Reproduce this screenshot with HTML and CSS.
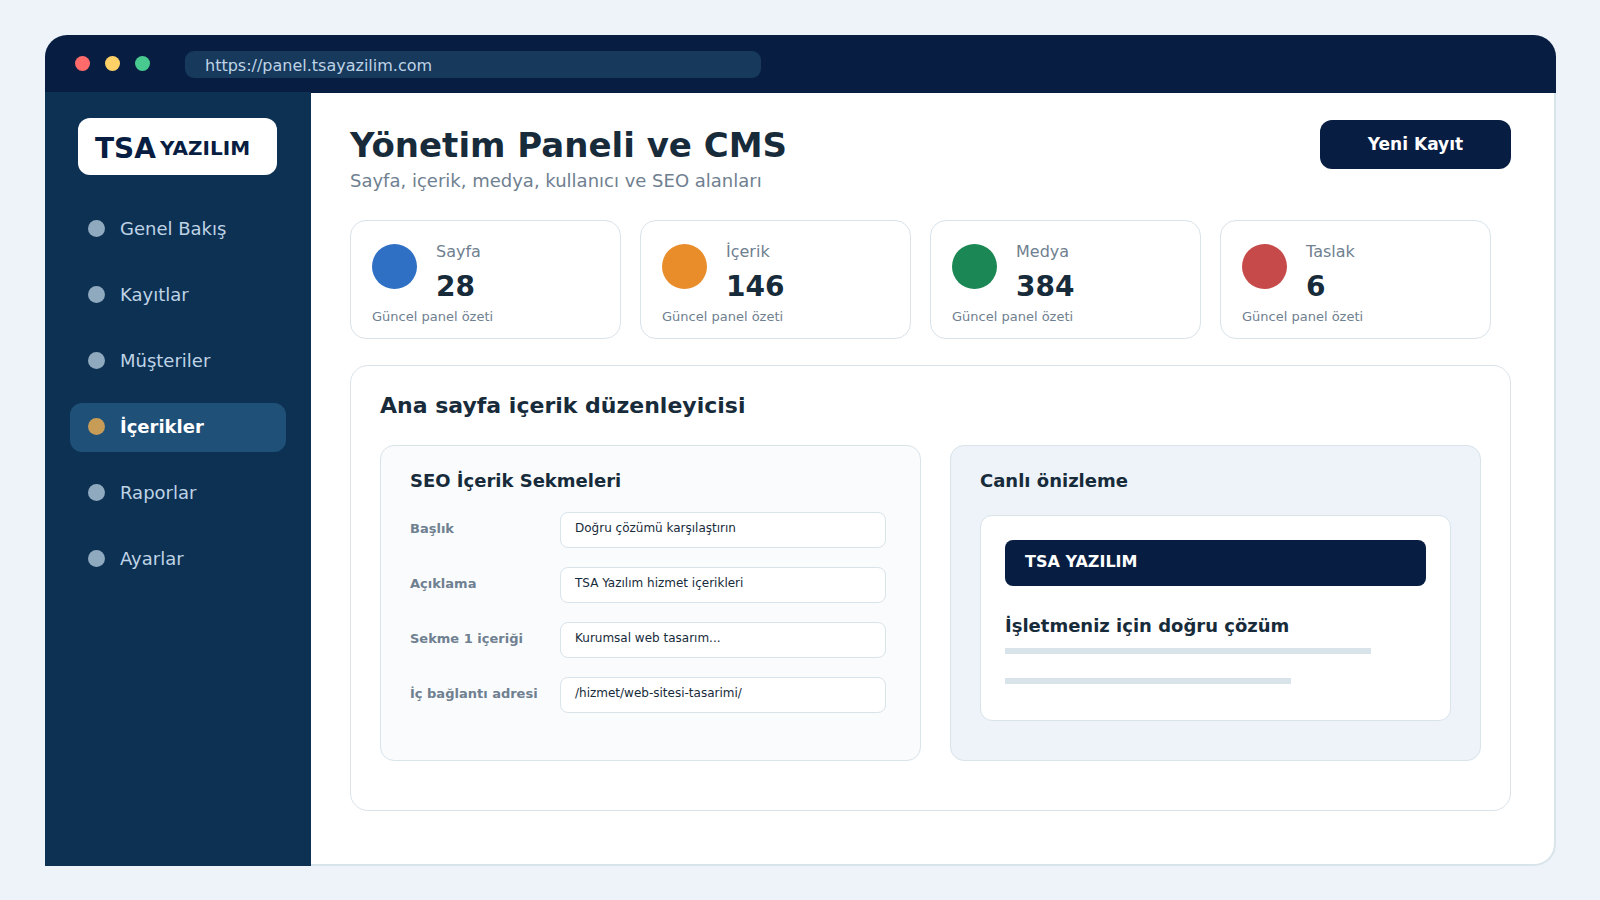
FILE: index.html
```html
<!DOCTYPE html>
<html lang="tr">
  <head>
    <meta charset="UTF-8" />
    <meta name="viewport" content="width=device-width, initial-scale=1.0" />
    <title>Yönetim Paneli ve CMS</title>
    <link rel="stylesheet" href="styles.css">
  </head>
  <body>
    <div class="window">
      <div class="titlebar">
        <span class="light red"></span>
        <span class="light yellow"></span>
        <span class="light green"></span>
        <div class="url">https://panel.tsayazilim.com</div>
      </div>

      <div class="layout">
        <aside class="sidebar">
          <div class="logo"><span class="logo-big">TSA</span><span class="logo-small">YAZILIM</span></div>
          <nav class="menu">
            <a class="item"><i></i><span>Genel Bakış</span></a>
            <a class="item"><i></i><span>Kayıtlar</span></a>
            <a class="item"><i></i><span>Müşteriler</span></a>
            <a class="item active"><i></i><span>İçerikler</span></a>
            <a class="item"><i></i><span>Raporlar</span></a>
            <a class="item"><i></i><span>Ayarlar</span></a>
          </nav>
        </aside>

        <main class="main">
          <header class="header">
            <div>
              <h1>Yönetim Paneli ve CMS</h1>
              <p class="subtitle">Sayfa, içerik, medya, kullanıcı ve SEO alanları</p>
            </div>
            <button class="add">Yeni Kayıt</button>
          </header>

          <section class="cards">
            <div class="card">
              <div class="card-head">
                <span class="circle blue"></span>
                <div>
                  <div class="label">Sayfa</div>
                  <div class="value">28</div>
                </div>
              </div>
              <div class="note">Güncel panel özeti</div>
            </div>
            <div class="card">
              <div class="card-head">
                <span class="circle orange"></span>
                <div>
                  <div class="label">İçerik</div>
                  <div class="value">146</div>
                </div>
              </div>
              <div class="note">Güncel panel özeti</div>
            </div>
            <div class="card">
              <div class="card-head">
                <span class="circle emerald"></span>
                <div>
                  <div class="label">Medya</div>
                  <div class="value">384</div>
                </div>
              </div>
              <div class="note">Güncel panel özeti</div>
            </div>
            <div class="card">
              <div class="card-head">
                <span class="circle crimson"></span>
                <div>
                  <div class="label">Taslak</div>
                  <div class="value">6</div>
                </div>
              </div>
              <div class="note">Güncel panel özeti</div>
            </div>
          </section>

          <section class="panel">
            <h2>Ana sayfa içerik düzenleyicisi</h2>
            <div class="columns">
              <div class="editor">
                <h3>SEO İçerik Sekmeleri</h3>
                <div class="fields">
                  <div class="field">
                    <label>Başlık</label>
                    <div class="input">Doğru çözümü karşılaştırın</div>
                  </div>
                  <div class="field">
                    <label>Açıklama</label>
                    <div class="input">TSA Yazılım hizmet içerikleri</div>
                  </div>
                  <div class="field">
                    <label>Sekme 1 içeriği</label>
                    <div class="input">Kurumsal web tasarım...</div>
                  </div>
                  <div class="field">
                    <label>İç bağlantı adresi</label>
                    <div class="input">/hizmet/web-sitesi-tasarimi/</div>
                  </div>
                </div>
              </div>

              <div class="preview">
                <h3>Canlı önizleme</h3>
                <div class="site">
                  <div class="site-bar">TSA YAZILIM</div>
                  <h4>İşletmeniz için doğru çözüm</h4>
                  <div class="line"></div>
                  <div class="line short"></div>
                </div>
              </div>
            </div>
          </section>
        </main>
      </div>
    </div>
  </body>
</html>
```
FILE: styles.css
```css
* {
  box-sizing: border-box;
  margin: 0;
  padding: 0;
}
body {
  height: 900px;
  padding: 35px 44px 34px 45px;
  overflow: hidden;
  background-color: #edf3f9;
  color: #172b3a;
  font-family: "DejaVu Sans", sans-serif;
}
.window {
  display: flex;
  flex-direction: column;
  height: 831px;
}

/* Title bar */
.titlebar {
  display: flex;
  align-items: flex-start;
  gap: 15px;
  height: 58px;
  padding: 16px 30px 0;
  background-color: #071d42;
  border-radius: 22px 22px 0 0;
}
.light {
  width: 15px;
  height: 15px;
  margin-top: 5px;
  border-radius: 50%;
}
.red {
  background-color: #ff6b6b;
}
.yellow {
  background-color: #ffd166;
}
.green {
  background-color: #47c98f;
}
.url {
  width: 576px;
  height: 27px;
  margin-left: 20px;
  padding-left: 20px;
  border-radius: 9px;
  background-color: #16395c;
  color: #bfd3e6;
  font-size: 16px;
  line-height: 29px;
}

.layout {
  display: flex;
  flex: 1;
}

/* Sidebar */
.sidebar {
  width: 266px;
  margin-top: -1px;
  padding: 26px 25px 0;
  background-color: #0d3152;
}
.logo {
  display: flex;
  align-items: baseline;
  width: 199px;
  height: 57px;
  margin-left: 8px;
  padding-left: 17px;
  border-radius: 12px;
  background-color: #fff;
  color: #071d42;
  font-weight: bold;
}
.logo-big {
  width: 65px;
  font-size: 28px;
  line-height: 61px;
}
.logo-small {
  position: relative;
  top: -3px;
  font-size: 20px;
}
.menu {
  display: flex;
  flex-direction: column;
  gap: 17px;
  margin-top: 30px;
}
.item {
  display: flex;
  align-items: flex-start;
  gap: 15px;
  height: 49px;
  padding-left: 18px;
  border-radius: 12px;
  color: #bfd3e6;
  font-size: 18px;
  line-height: 47px;
}
.item i {
  width: 17px;
  height: 17px;
  margin-top: 15px;
  border-radius: 50%;
  background-color: #8fa9bf;
}
.item.active {
  background-color: #1f5078;
  color: #fff;
  font-weight: bold;
}
.item.active i {
  background-color: #c79c56;
}

/* Main area */
.main {
  flex: 1;
  padding: 27px 43px 0 39px;
  border-right: 2px solid #d9e3ea;
  border-bottom: 2px solid #d9e3ea;
  border-bottom-right-radius: 22px;
  background-color: #fff;
}
.header {
  display: flex;
  justify-content: space-between;
  align-items: flex-start;
}
h1 {
  font-size: 34px;
  line-height: 50px;
}
.subtitle {
  color: #6f8090;
  font-size: 18px;
  line-height: 22px;
}
.add {
  width: 191px;
  height: 49px;
  padding-bottom: 2px;
  border: none;
  border-radius: 12px;
  background-color: #071d42;
  color: #fff;
  font-family: inherit;
  font-size: 17px;
  font-weight: bold;
}

/* Stat cards */
.cards {
  display: flex;
  gap: 19px;
  margin-top: 28px;
}
.card {
  width: 271px;
  height: 119px;
  padding: 20px 21px 0;
  border: 1px solid #d9e3ea;
  border-radius: 16px;
}
.card-head {
  display: flex;
  gap: 19px;
}
.circle {
  width: 45px;
  height: 45px;
  margin-top: 3px;
  border-radius: 50%;
}
.blue {
  background-color: #2f6fc4;
}
.orange {
  background-color: #e88d2a;
}
.emerald {
  background-color: #1a8754;
}
.crimson {
  background-color: #c74a4a;
}
.label {
  color: #6f8090;
  font-size: 16px;
  line-height: 21px;
}
.value {
  margin-top: 7px;
  font-size: 28px;
  font-weight: bold;
  line-height: 36px;
}
.note {
  margin-top: 4px;
  color: #6f8090;
  font-size: 13px;
  line-height: 16px;
}

/* Content editor */
.panel {
  height: 446px;
  margin-top: 26px;
  padding: 25px 29px 0;
  border: 1px solid #d9e3ea;
  border-radius: 18px;
}
h2 {
  font-size: 22px;
  line-height: 30px;
}
.columns {
  display: flex;
  gap: 29px;
  margin-top: 24px;
}
.editor,
.preview {
  height: 316px;
  padding: 22px 29px 0;
  border: 1px solid #d9e3ea;
  border-radius: 14px;
}
.editor {
  width: 541px;
  background-color: #f9fbfd;
}
.preview {
  width: 531px;
  background-color: #edf3f9;
}
h3,
h4 {
  font-size: 18px;
  line-height: 26px;
}
.fields {
  display: flex;
  flex-direction: column;
  gap: 19px;
  margin-top: 18px;
}
.field {
  display: flex;
}
.field label {
  width: 150px;
  color: #6f8090;
  font-size: 13px;
  font-weight: bold;
  line-height: 33px;
}
.input {
  width: 326px;
  height: 36px;
  padding-left: 14px;
  border: 1px solid #d9e3ea;
  border-radius: 8px;
  background-color: #fff;
  font-size: 12px;
  line-height: 30px;
}
.site {
  height: 206px;
  margin-top: 21px;
  padding: 24px;
  border: 1px solid #d9e3ea;
  border-radius: 12px;
  background-color: #fff;
}
.site-bar {
  height: 46px;
  margin-bottom: 27px;
  padding-left: 20px;
  border-radius: 8px;
  background-color: #071d42;
  color: #fff;
  font-size: 16px;
  font-weight: bold;
  line-height: 43px;
}
.line {
  width: 366px;
  height: 6px;
  margin-top: 9px;
  background-color: #d9e3ea;
}
.line.short {
  width: 286px;
  margin-top: 24px;
}
```
